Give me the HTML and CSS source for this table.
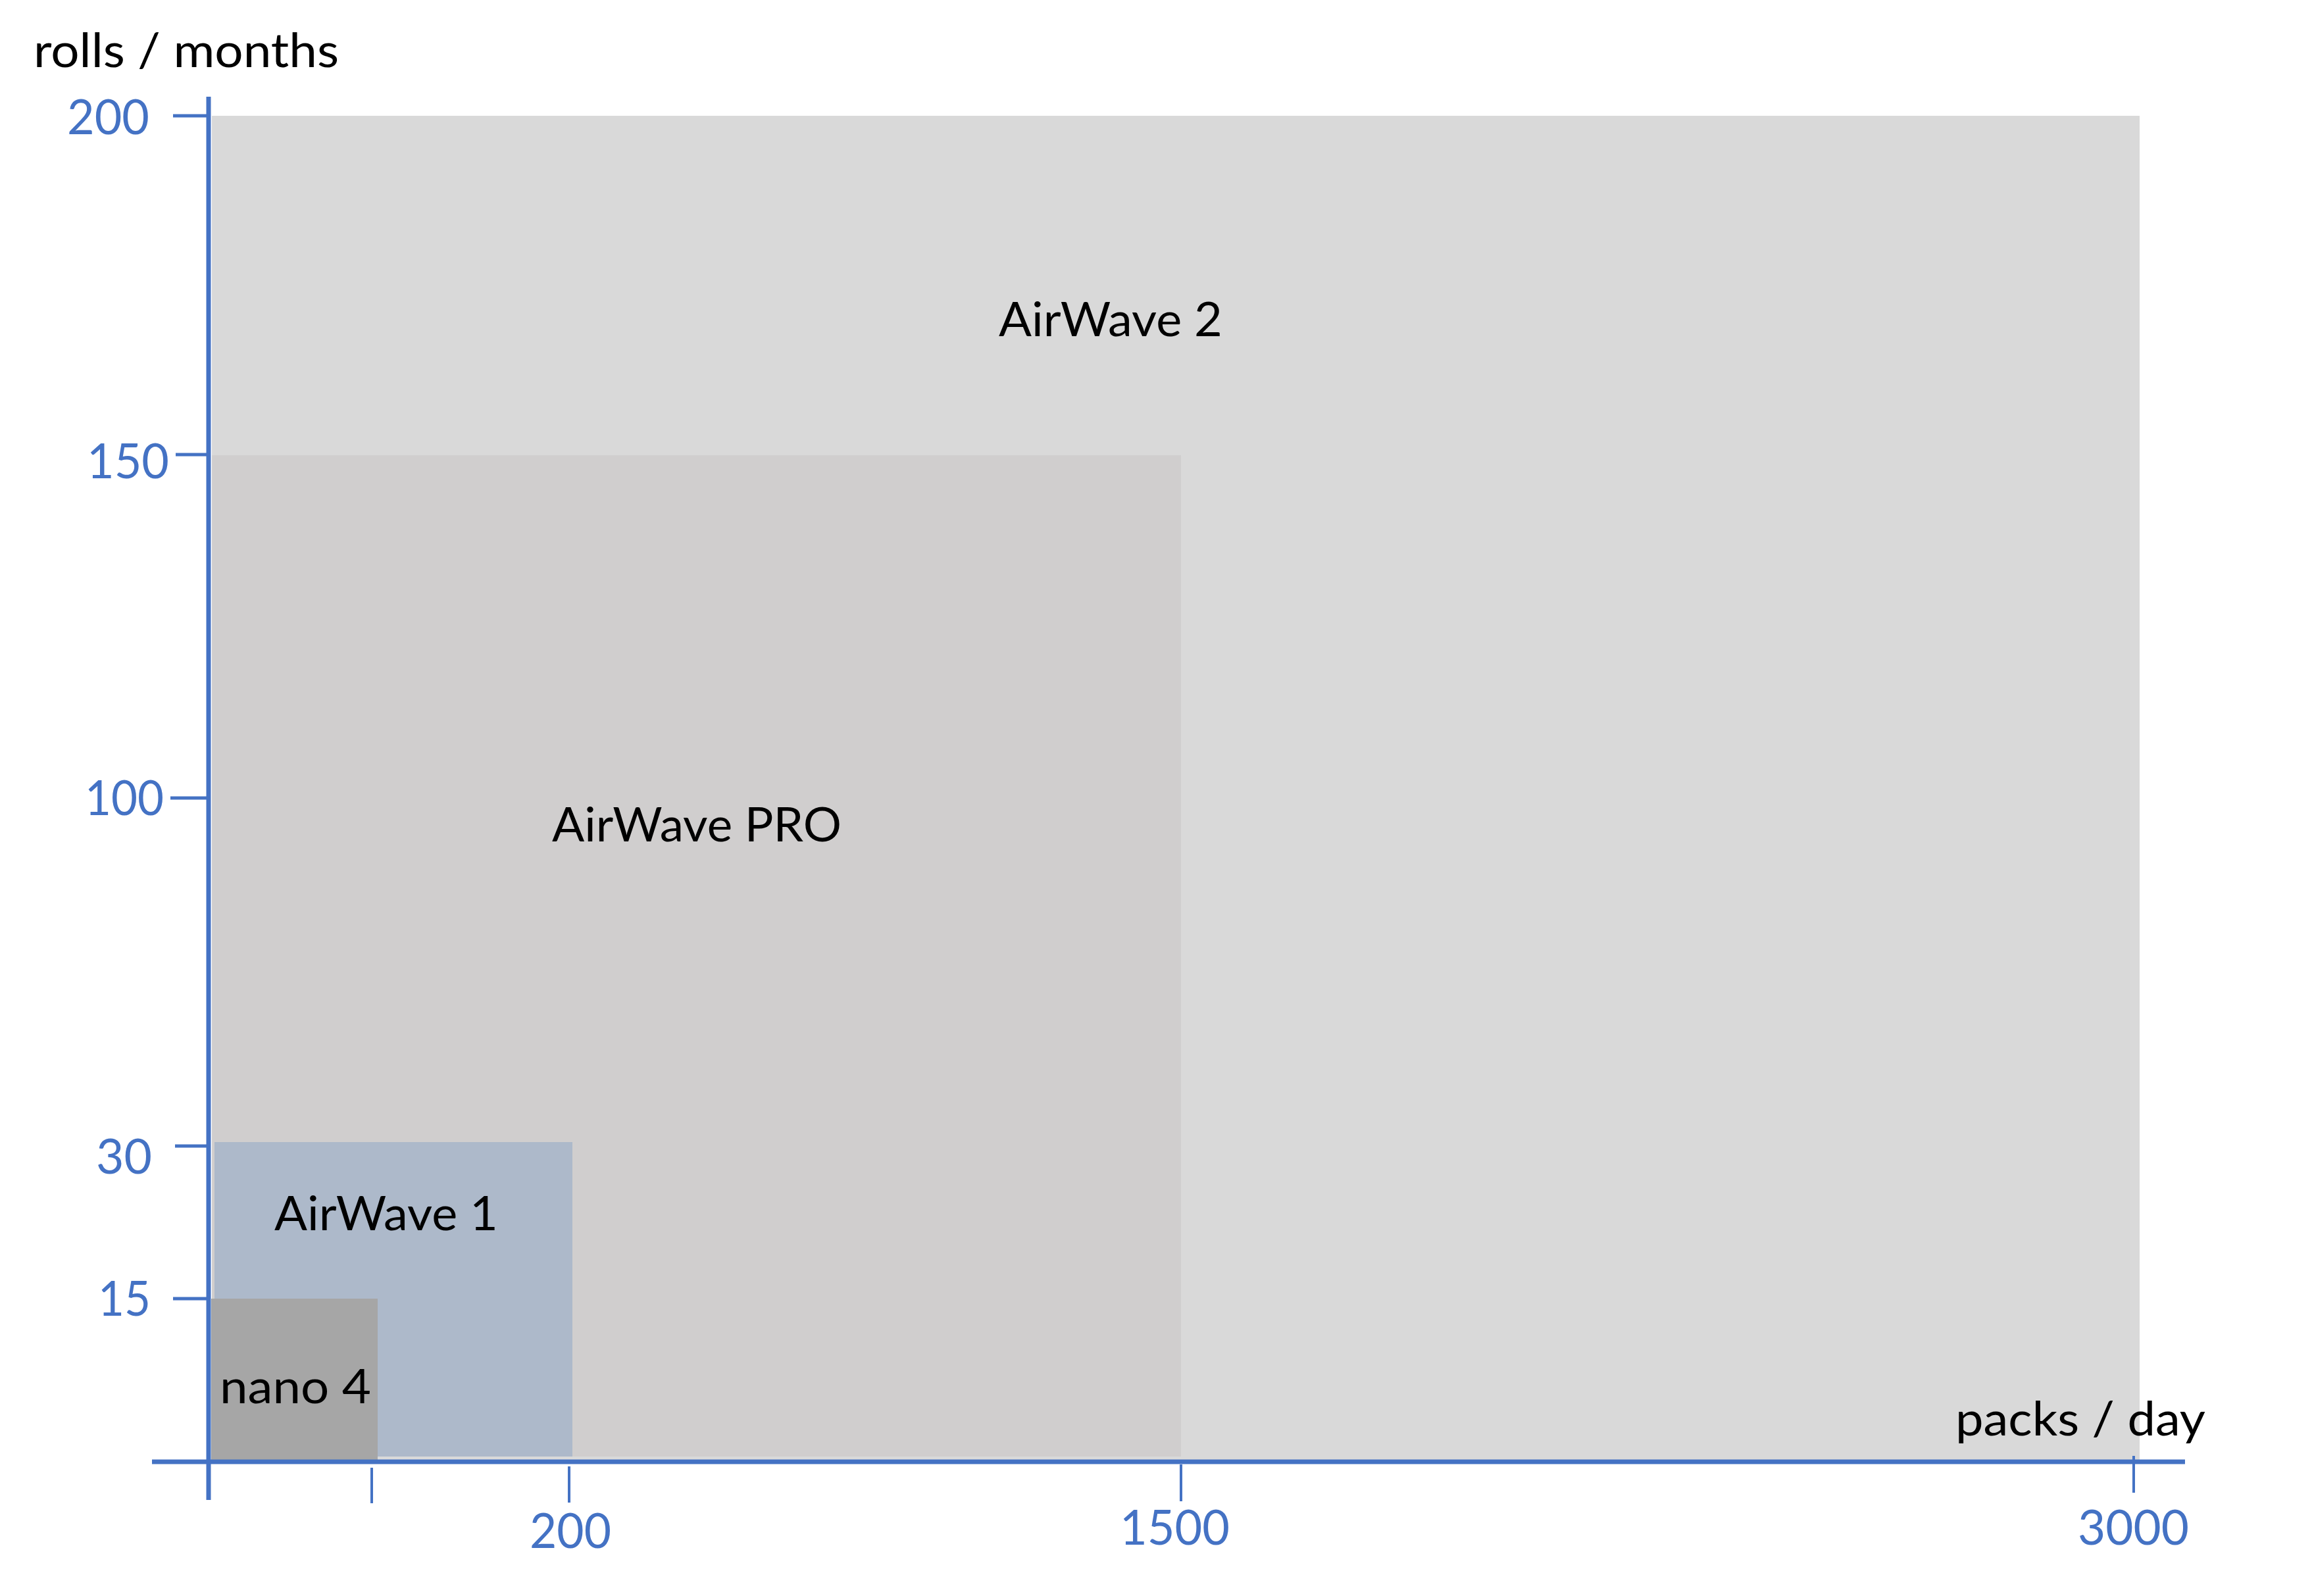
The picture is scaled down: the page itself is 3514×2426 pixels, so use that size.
FILE: index.html
```html
<!DOCTYPE html>
<html lang="en">
<head>
<meta charset="utf-8">
<title>rolls / months vs packs / day</title>
<link rel="stylesheet" href="styles.css">
</head>
<body>
<figure class="chart">
<svg class="chart-svg" width="3514" height="2426" viewBox="0 0 3514 2426" xmlns="http://www.w3.org/2000/svg">
  <!-- areas -->
  <rect class="area area-aw2" x="322" y="176" width="2930" height="2043"/>
  <rect class="area area-pro" x="322" y="692" width="1473" height="1522"/>
  <rect class="area area-aw1" x="326" y="1736" width="544" height="478"/>
  <rect class="area area-nano" x="321" y="1974" width="253" height="247"/>

  <!-- area labels -->
  <text class="label" x="1518" y="511" textLength="340" lengthAdjust="spacingAndGlyphs">AirWave 2</text>
  <text class="label" x="839" y="1279" textLength="440" lengthAdjust="spacingAndGlyphs">AirWave PRO</text>
  <text class="label" x="417" y="1870" textLength="340" lengthAdjust="spacingAndGlyphs">AirWave 1</text>
  <text class="label" x="334" y="2133" textLength="230" lengthAdjust="spacingAndGlyphs">nano 4</text>

  <!-- axis titles -->
  <text class="label" x="51" y="102" textLength="464" lengthAdjust="spacingAndGlyphs">rolls / months</text>
  <text class="label" x="2972" y="2182" textLength="380" lengthAdjust="spacingAndGlyphs">packs / day</text>

  <!-- axes -->
  <line class="axis" x1="317" y1="147" x2="317" y2="2280"/>
  <line class="axis" x1="231" y1="2222" x2="3321" y2="2222"/>

  <!-- y ticks -->
  <line class="tick-y" x1="263" y1="176" x2="317" y2="176"/>
  <line class="tick-y" x1="267" y1="691" x2="317" y2="691"/>
  <line class="tick-y" x1="259" y1="1213" x2="317" y2="1213"/>
  <line class="tick-y" x1="266" y1="1742" x2="317" y2="1742"/>
  <line class="tick-y" x1="263" y1="1974" x2="317" y2="1974"/>

  <!-- x ticks -->
  <line class="tick-x" x1="565" y1="2231" x2="565" y2="2285"/>
  <line class="tick-x" x1="865" y1="2229" x2="865" y2="2284"/>
  <line class="tick-x" x1="1795" y1="2226" x2="1795" y2="2282"/>
  <line class="tick-x" x1="3243" y1="2213" x2="3243" y2="2269"/>

  <!-- y tick labels -->
  <text class="num" x="102" y="204" textLength="125" lengthAdjust="spacingAndGlyphs">200</text>
  <text class="num" x="132" y="727" textLength="125" lengthAdjust="spacingAndGlyphs">150</text>
  <text class="num" x="129" y="1239" textLength="120" lengthAdjust="spacingAndGlyphs">100</text>
  <text class="num" x="146" y="1784" textLength="85" lengthAdjust="spacingAndGlyphs">30</text>
  <text class="num" x="149" y="2000" textLength="80" lengthAdjust="spacingAndGlyphs">15</text>

  <!-- x tick labels -->
  <text class="num" x="805" y="2353" textLength="124" lengthAdjust="spacingAndGlyphs">200</text>
  <text class="num" x="1702" y="2348" textLength="167" lengthAdjust="spacingAndGlyphs">1500</text>
  <text class="num" x="3158" y="2348" textLength="169" lengthAdjust="spacingAndGlyphs">3000</text>
</svg>
</figure>
</body>
</html>
```
FILE: styles.css
```css
html, body {
  margin: 0;
  padding: 0;
  background: #ffffff;
}

.chart {
  margin: 0;
  width: 3514px;
  height: 2426px;
  overflow: hidden;
}

.chart-svg {
  display: block;
}

.area-aw2 { fill: #d9d9d9; }
.area-pro { fill: #d0cece; }
.area-aw1 { fill: #adb9ca; }
.area-nano { fill: #a6a6a6; }

.label {
  font-family: Lato, "Open Sans", sans-serif;
  font-size: 72px;
  fill: #000000;
}

.num {
  font-family: Lato, "Open Sans", sans-serif;
  font-size: 74px;
  fill: #4472c4;
}

.axis {
  stroke: #4472c4;
  stroke-width: 7;
}

.tick-y {
  stroke: #4472c4;
  stroke-width: 5;
}

.tick-x {
  stroke: #4472c4;
  stroke-width: 4;
}
```
